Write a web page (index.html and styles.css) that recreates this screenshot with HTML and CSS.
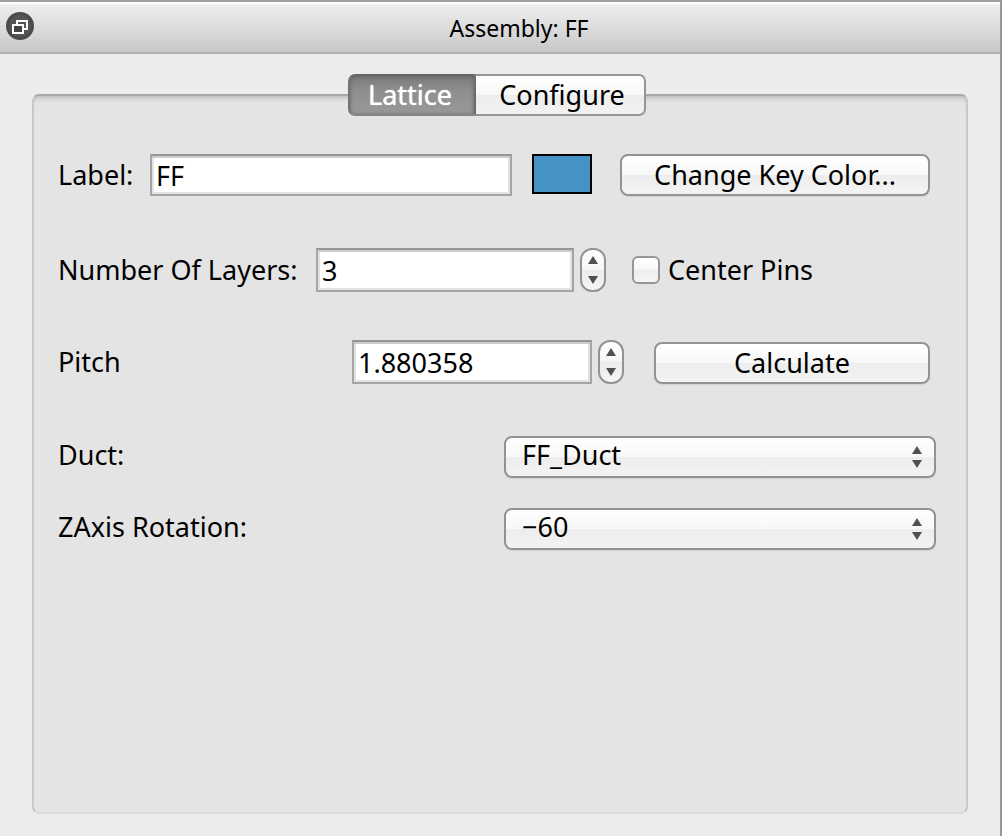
FILE: index.html
```html
<!DOCTYPE html>
<html lang="en">
<head>
<meta charset="utf-8">
<meta name="viewport" content="width=device-width, initial-scale=1">
<title>Assembly: FF</title>
<link rel="stylesheet" href="styles.css">
</head>
<body>
<div class="dock">
  <header class="titlebar">
    <button class="float-button" type="button" aria-label="Float panel">
      <svg width="28" height="28" viewBox="0 0 28 28" aria-hidden="true">
        <circle cx="14" cy="14" r="14" fill="#4a4a4a"/>
        <circle cx="14" cy="14" r="11" fill="#555"/>
        <path d="M11 12V9h10v8h-3" fill="none" stroke="#fff" stroke-width="2"/>
        <rect x="7" y="13" width="10" height="8" fill="#444" stroke="#fff" stroke-width="2"/>
      </svg>
    </button>
    <h1 class="title">Assembly: FF</h1>
  </header>

  <main class="content">
    <div class="tabs" role="tablist">
      <button class="tab tab-active" type="button" role="tab" aria-selected="true">Lattice</button>
      <button class="tab" type="button" role="tab" aria-selected="false">Configure</button>
    </div>

    <form class="panel" role="tabpanel">
      <div class="row row-label">
        <label for="label">Label:</label>
        <input class="field" id="label" type="text" value="FF">
        <span class="swatch"></span>
        <button class="button button-color" type="button">Change Key Color...</button>
      </div>

      <div class="row row-layers">
        <label for="layers">Number Of Layers:</label>
        <input class="field" id="layers" type="text" value="3">
        <span class="stepper">
          <button class="step" type="button" aria-label="More layers"><svg width="10" height="8" viewBox="0 0 10 8"><path d="M5 0l5 8H0z" fill="#505050"/></svg></button>
          <button class="step" type="button" aria-label="Fewer layers"><svg width="10" height="8" viewBox="0 0 10 8"><path d="M0 0h10L5 8z" fill="#505050"/></svg></button>
        </span>
        <label class="check"><input class="checkbox" type="checkbox">Center Pins</label>
      </div>

      <div class="row row-pitch">
        <label for="pitch">Pitch</label>
        <input class="field" id="pitch" type="text" value="1.880358">
        <span class="stepper">
          <button class="step" type="button" aria-label="Increase pitch"><svg width="10" height="8" viewBox="0 0 10 8"><path d="M5 0l5 8H0z" fill="#505050"/></svg></button>
          <button class="step" type="button" aria-label="Decrease pitch"><svg width="10" height="8" viewBox="0 0 10 8"><path d="M0 0h10L5 8z" fill="#505050"/></svg></button>
        </span>
        <button class="button button-calculate" type="button">Calculate</button>
      </div>

      <div class="row row-select">
        <label for="duct">Duct:</label>
        <span class="select-wrap">
          <select class="select" id="duct"><option>FF_Duct</option></select>
          <svg class="arrows" width="10" height="22" viewBox="0 0 10 22" aria-hidden="true"><path d="M5 0l5 8H0zM0 14h10l-5 8z" fill="#505050"/></svg>
        </span>
      </div>

      <div class="row row-select">
        <label for="rotation">ZAxis Rotation:</label>
        <span class="select-wrap">
          <select class="select" id="rotation"><option>−60</option></select>
          <svg class="arrows" width="10" height="22" viewBox="0 0 10 22" aria-hidden="true"><path d="M5 0l5 8H0zM0 14h10l-5 8z" fill="#505050"/></svg>
        </span>
      </div>
    </form>
  </main>
</div>
</body>
</html>
```

FILE: styles.css
```css
* {
  box-sizing: border-box;
}

body {
  margin: 0;
  color: #000;
  font: 27px/32px "Noto Sans", "Open Sans", sans-serif;
}

button,
input,
select {
  margin: 0;
  color: inherit;
  font: inherit;
}

.dock {
  display: flex;
  flex-direction: column;
  min-height: 100vh;
  border-top: 2px solid #a0a0a0;
  border-right: 2px solid #969696;
  background: #ececec;
}

.titlebar {
  display: flex;
  align-items: center;
  height: 52px;
  padding: 0 0 4px 6px;
  border-top: 2px solid #fff;
  border-bottom: 2px solid #b0b0b0;
  background: linear-gradient(#efefef, #c8c8c8);
}

.float-button {
  display: flex;
  padding: 0;
  border: 0;
  border-radius: 50%;
  background: none;
}

.title {
  flex: 1;
  margin: 0;
  padding: 4px 0 0 4px;
  font-size: 23px;
  font-weight: 400;
  text-align: center;
}

.content {
  display: flex;
  flex: 1;
  flex-direction: column;
  padding: 20px 32px 22px;
}

.tabs {
  z-index: 1;
  display: flex;
  align-self: center;
  margin: 0 6px -22px 0;
}

.tab {
  min-width: 170px;
  height: 42px;
  padding: 0 18px 0 22px;
  border: 2px solid #969696;
  border-left: 0;
  border-radius: 0 7px 7px 0;
  background: linear-gradient(#fff, #f7f7f7 50%, #ededed 51%, #f2f2f2);
}

.tab-active {
  min-width: 128px;
  padding: 0 22px 0 18px;
  border: 2px solid #6f6f6f;
  border-color: #656565 #6c6c6c #858585 #747474;
  border-radius: 7px 0 0 7px;
  background: linear-gradient(#7b7b7b, #8f8f8f 40%, #989898);
  box-shadow: inset 0 1px 4px #666;
  color: #fff;
  text-shadow: 0 0 1px #fff;
}

.panel {
  flex: 1;
  padding: 58px 30px 58px 24px;
  border: 2px solid #c8c8c8;
  border-top-color: #a8a8a8;
  border-bottom-color: #dadada;
  border-radius: 7px;
  background: #e4e4e4;
  box-shadow: inset 0 2px #c8c8c8, inset 0 4px #d8d8d8, inset 0 6px #dfdfdf;
}

.row {
  display: flex;
  align-items: center;
}

.row-label {
  padding-right: 6px;
}

.row-layers {
  margin-top: 52px;
  padding-right: 6px;
}

.row-pitch {
  margin-top: 48px;
  padding-right: 6px;
}

.row-select {
  margin-top: 52px;
}

.row-select + .row-select {
  margin-top: 30px;
}

.row-label > label {
  flex: 0 0 92px;
}

.row-layers > label:first-child {
  flex: 0 0 258px;
}

.row-pitch > label,
.row-select > label {
  flex: 0 0 294px;
}

.row-select > label {
  flex-basis: 446px;
  padding-bottom: 4px;
}

.field {
  flex: 1;
  min-width: 0;
  height: 44px;
  padding: 0 4px;
  border: 2px solid #a5a5a5;
  border-top-color: #959595;
  border-radius: 0;
  background: #fff;
  box-shadow: inset 0 2px #cdcdcd, inset 0 0 0 2px #e2e2e2;
}

.row-label .field {
  height: 42px;
}

.swatch {
  width: 60px;
  height: 40px;
  margin: 0 28px 2px 20px;
  border: 2px solid #000;
  background: #4492c6;
}

.button,
.select {
  height: 42px;
  padding: 0;
  border: 2px solid #939393;
  border-radius: 8px;
  background: linear-gradient(#fff, #f7f7f7 50%, #ededed 51%, #f3f3f3);
  box-shadow: 0 1px 1px #d2d2d2;
}

.button-color {
  width: 310px;
}

.button-calculate {
  width: 276px;
  margin: 2px 0 0 30px;
}

.stepper {
  display: flex;
  flex-direction: column;
  width: 26px;
  height: 44px;
  margin-left: 6px;
  border: 2px solid #939393;
  border-radius: 12px;
  background: linear-gradient(#fff, #f5f5f5 50%, #ebebeb 51%, #f6f6f6);
}

.step {
  display: flex;
  flex: 1;
  align-items: center;
  justify-content: center;
  padding: 0;
  border: 0;
  background: none;
}

.check {
  display: flex;
  flex: 0 0 324px;
  align-items: center;
  gap: 8px;
  padding-left: 26px;
}

.checkbox {
  width: 28px;
  height: 28px;
  border: 2px solid #969696;
  border-radius: 6px;
  appearance: none;
  background: linear-gradient(#fff, #f7f7f7 50%, #eee 51%, #f6f6f6);
}

.checkbox:checked {
  background: #5b9bd5;
}

.select-wrap {
  position: relative;
  display: flex;
  flex: 1;
}

.select {
  width: 100%;
  padding: 0 40px 4px 16px;
  appearance: none;
}

.arrows {
  position: absolute;
  top: 10px;
  right: 14px;
  pointer-events: none;
}
```
